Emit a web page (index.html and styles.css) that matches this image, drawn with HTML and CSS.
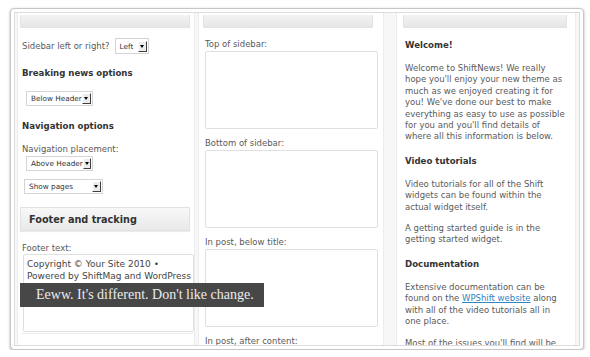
FILE: index.html
```html
<!DOCTYPE html>
<html>
<head>
    <title>ShiftNews theme options</title>
    <link rel="stylesheet" href="styles.css">
</head>
<body>
    <div class="frame">
        <div class="viewport">
            <div class="column left-col">
                <div class="box-head"></div>

                <div class="row first-row">
                    <span class="label">Sidebar left or right?</span>
                    <span class="select select-left">Left<span class="arrow"></span></span>
                </div>

                <h3 class="group-title news-title">Breaking news options</h3>
                <span class="select select-wide news-select">Below Header<span class="arrow"></span></span>

                <h3 class="group-title nav-title">Navigation options</h3>
                <div class="label nav-label">Navigation placement:</div>
                <span class="select select-wide nav-select">Above Header<span class="arrow"></span></span>
                <span class="select select-pages">Show pages<span class="arrow"></span></span>

                <div class="section-head">Footer and tracking</div>

                <div class="label footer-label">Footer text:</div>
                <div class="textbox footer-box">
                    Copyright © Your Site 2010 •<br>
                    Powered by ShiftMag and WordPress
                </div>
                <div class="divider"></div>
            </div>

            <div class="column mid-col">
                <div class="box-head"></div>

                <div class="label mid-label top-label">Top of sidebar:</div>
                <div class="textbox area"></div>

                <div class="label mid-label">Bottom of sidebar:</div>
                <div class="textbox area"></div>

                <div class="label mid-label">In post, below title:</div>
                <div class="textbox area"></div>

                <div class="label mid-label">In post, after content:</div>
            </div>

            <div class="column right-col">
                <div class="box-head"></div>

                <h3 class="help-title first-help">Welcome!</h3>
                <p>Welcome to ShiftNews! We really<br>
                hope you'll enjoy your new theme as<br>
                much as we enjoyed creating it for<br>
                you! We've done our best to make<br>
                everything as easy to use as possible<br>
                for you and you'll find details of<br>
                where all this information is below.</p>

                <h3 class="help-title">Video tutorials</h3>
                <p>Video tutorials for all of the Shift<br>
                widgets can be found within the<br>
                actual widget itself.</p>
                <p>A getting started guide is in the<br>
                getting started widget.</p>

                <h3 class="help-title">Documentation</h3>
                <p>Extensive documentation can be<br>
                found on the <a href="#">WPShift website</a> along<br>
                with all of the video tutorials all in<br>
                one place.</p>
                <p>Most of the issues you'll find will be</p>
            </div>

            <div class="tooltip">Eeww. It's different. Don't like change.</div>
        </div>
    </div>
</body>
</html>
```

FILE: styles.css
```css
body {
    margin: 0;
    background: #fff;
    font-family: "DejaVu Sans", Verdana, sans-serif;
    color: #5a5a5a;
}

.frame {
    margin: 8px 0 0 10px;
    width: 574px;
    height: 342px;
    box-sizing: border-box;
    border: 1px solid #c6c6c6;
    border-radius: 4px;
    padding: 3px;
    background: #fff;
    box-shadow: 0 1px 3px rgba(0, 0, 0, 0.3);
}

.viewport {
    position: relative;
    height: 100%;
    box-sizing: border-box;
    border: 1px solid #dcdcdc;
    background: #f7f7f7;
    overflow: hidden;
    display: flex;
    align-items: flex-start;
}

.column {
    display: flex;
    flex-direction: column;
    align-items: flex-start;
    height: 400px;
    box-sizing: border-box;
    background: #fff;
    border-left: 1px solid #ececec;
    border-right: 1px solid #ececec;
}

.left-col {
    margin-left: 2px;
    width: 178px;
    padding: 0 1px 0 4px;
}

.mid-col {
    margin-left: 3px;
    width: 186px;
    padding: 0 5px 0 6px;
}

.right-col {
    margin-left: 12px;
    width: 180px;
    padding: 0 6px 0 8px;
}

.box-head {
    margin: 2px 0 0 -2px;
    width: 170px;
    height: 13px;
    background: linear-gradient(#f3f3f3, #e6e6e6);
    border: 1px solid #e3e3e3;
    border-top: none;
    box-sizing: border-box;
}

.right-col .box-head {
    width: 164px;
}

.label {
    font-size: 8.5px;
    line-height: 12px;
    color: #5a5a5a;
    white-space: nowrap;
}

.row {
    display: flex;
    align-items: center;
    gap: 5px;
}

.first-row {
    margin-top: 10px;
}

.select {
    display: inline-flex;
    align-items: center;
    justify-content: space-between;
    box-sizing: border-box;
    height: 15px;
    border: 1px solid #d4d4d4;
    background: #fff;
    font-size: 7.3px;
    color: #333;
    padding: 0 1px 0 4px;
    white-space: nowrap;
}

.select-left {
    width: 34px;
    height: 16px;
}

.select-wide {
    width: 67px;
    margin-left: 4px;
}

.select-pages {
    width: 79px;
    margin: 8px 0 0 2px;
}

.arrow {
    position: relative;
    width: 9px;
    height: 11px;
    box-sizing: border-box;
    background: #ececec;
    border-top: 1px solid #fff;
    border-left: 1px solid #fff;
    border-right: 1px solid #404040;
    border-bottom: 1px solid #404040;
}

.arrow::after {
    content: "";
    position: absolute;
    left: 1px;
    top: 3px;
    border-left: 2.5px solid transparent;
    border-right: 2.5px solid transparent;
    border-top: 3px solid #000;
}

.group-title {
    margin: 0;
    font-size: 8.6px;
    line-height: 12px;
    font-weight: bold;
    color: #333;
    white-space: nowrap;
}

.news-title {
    margin-top: 13px;
}

.news-select {
    margin-top: 12px;
}

.nav-title {
    margin-top: 14px;
}

.nav-label {
    margin-top: 11px;
}

.nav-select {
    margin-top: 1px;
}

.section-head {
    margin: 13px 0 0 -2px;
    width: 170px;
    height: 24px;
    box-sizing: border-box;
    padding-left: 8px;
    display: flex;
    align-items: center;
    font-size: 9.7px;
    font-weight: bold;
    color: #333;
    background: linear-gradient(#f8f8f8, #e9e9e9);
    border: 1px solid #e2e2e2;
    box-shadow: 0 1px 1px rgba(0, 0, 0, 0.08);
}

.footer-label {
    margin-top: 11px;
}

.textbox {
    box-sizing: border-box;
    background: #fff;
    border: 1px solid #e0e0e0;
    border-radius: 2px;
}

.footer-box {
    margin-left: 1px;
    width: 171px;
    height: 78px;
    padding: 3px 0 0 3px;
    font-size: 9px;
    line-height: 12px;
    color: #444;
    white-space: nowrap;
}

.divider {
    margin-top: 1px;
    width: 171px;
    border-top: 1px solid #ececec;
}

.mid-label {
    margin-top: 8px;
}

.top-label {
    margin-top: 10px;
}

.area {
    width: 173px;
    height: 78px;
    margin-top: 1px;
}

.help-title {
    margin: 12px 0 0 0;
    font-size: 8.6px;
    line-height: 12px;
    font-weight: bold;
    color: #333;
}

.first-help {
    margin-top: 11px;
}

.right-col p {
    margin: 12px 0 0 0;
    font-size: 8.5px;
    line-height: 11.4px;
    color: #5a5a5a;
    white-space: nowrap;
}

.right-col p + p {
    margin-top: 10px;
}

.right-col a {
    color: #2f86c0;
}

.tooltip {
    position: absolute;
    left: 5px;
    top: 270px;
    width: 244px;
    height: 24px;
    box-sizing: border-box;
    padding-left: 16px;
    display: flex;
    align-items: center;
    background: #474747;
    color: #ececec;
    font-family: "Liberation Serif", "Times New Roman", serif;
    font-size: 14px;
    white-space: nowrap;
}
```
